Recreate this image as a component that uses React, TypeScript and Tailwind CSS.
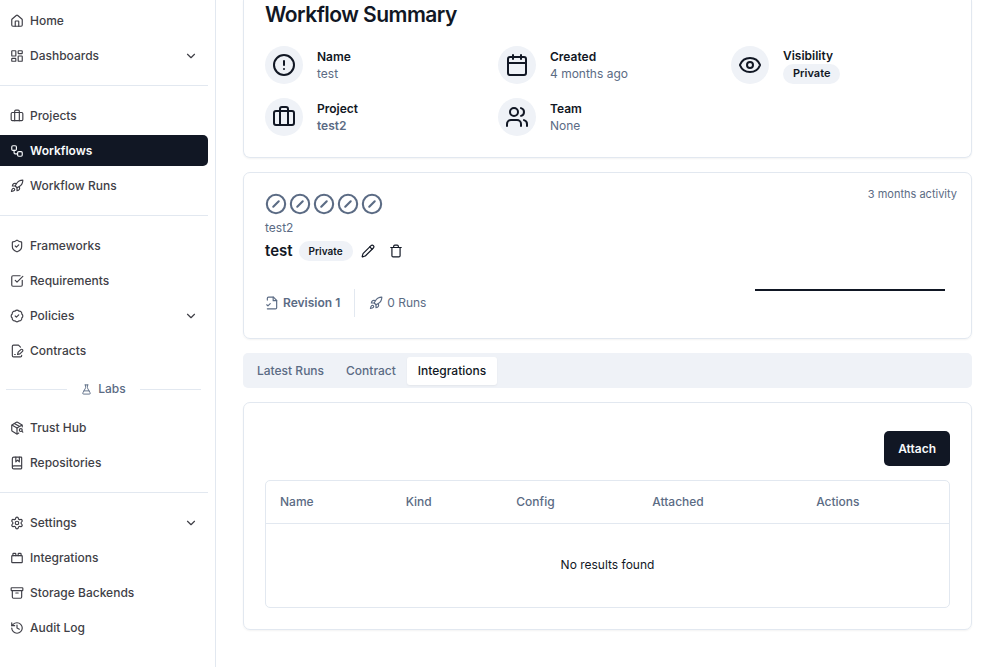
import React from 'react';
import {
  Archive,
  BadgeCheck,
  BookMarked,
  Briefcase,
  Calendar,
  ChevronDown,
  CircleAlert,
  CircleSlash,
  Eye,
  FlaskConical,
  History,
  House,
  LayoutDashboard,
  LucideIcon,
  PackageSearch,
  Pencil,
  Rocket,
  Settings,
  ShieldCheck,
  SquareCheckBig,
  ToyBrick,
  Trash,
  Users,
  Workflow,
} from 'lucide-react';

type IconType = LucideIcon | React.FC<{ className?: string; strokeWidth?: number }>;

const ContractIcon: IconType = ({ className, strokeWidth = 2 }: { className?: string; strokeWidth?: number }) => (
  <svg
    className={className}
    viewBox="0 0 24 24"
    fill="none"
    stroke="currentColor"
    strokeWidth={strokeWidth}
    strokeLinecap="round"
    strokeLinejoin="round"
  >
    <path d="M20 19.5v.5a2 2 0 0 1-2 2H6a2 2 0 0 1-2-2V4a2 2 0 0 1 2-2h8.5L18 5.5" />
    <path d="M8 18h1" />
    <path d="M18.42 9.61a2.1 2.1 0 1 1 2.97 2.97L16.95 17 13 18l.99-3.95 4.43-4.44Z" />
  </svg>
);

const RevisionIcon: IconType = ({ className, strokeWidth = 2 }: { className?: string; strokeWidth?: number }) => (
  <svg
    className={className}
    viewBox="0 0 24 24"
    fill="none"
    stroke="currentColor"
    strokeWidth={strokeWidth}
    strokeLinecap="round"
    strokeLinejoin="round"
  >
    <path d="M4 7V4a2 2 0 0 1 2-2h8.5L20 7.5V20a2 2 0 0 1-2 2H4" />
    <path d="M14 2v6h6" />
    <path d="m3 15 2 2 4-4" />
  </svg>
);

interface NavItemProps {
  icon: IconType;
  label: string;
  active?: boolean;
  expandable?: boolean;
}

const NavItem = ({ icon: Icon, label, active, expandable }: NavItemProps) => {
  const content = (
    <>
      <Icon className="size-[14px] shrink-0" strokeWidth={2} />
      <span>{label}</span>
      {expandable && <ChevronDown className="ml-auto size-[14px]" />}
    </>
  );
  const base = 'flex h-[31px] w-full items-center gap-[6px] rounded-r-[5px] pl-[10px] pr-[10px]';

  if (expandable) {
    return (
      <button type="button" className={`${base} cursor-pointer text-zinc-700`}>
        {content}
      </button>
    );
  }
  return (
    <a href="#" className={`${base} ${active ? 'bg-[#111724] font-semibold text-slate-50' : 'text-zinc-700'}`}>
      {content}
    </a>
  );
};

const Sidebar = () => (
  <aside className="w-[216px] shrink-0 border-r border-slate-200 pr-[7px] pt-[5px]">
    <nav className="text-[12px] font-medium leading-[18px]">
      <div className="flex flex-col gap-1">
        <NavItem icon={House} label="Home" />
        <NavItem icon={LayoutDashboard} label="Dashboards" expandable />
      </div>
      <hr className="my-[14px] border-slate-200" />
      <div className="flex flex-col gap-1">
        <NavItem icon={Briefcase} label="Projects" />
        <NavItem icon={Workflow} label="Workflows" active />
        <NavItem icon={Rocket} label="Workflow Runs" />
      </div>
      <hr className="my-[14px] border-slate-200" />
      <div className="flex flex-col gap-1">
        <NavItem icon={ShieldCheck} label="Frameworks" />
        <NavItem icon={SquareCheckBig} label="Requirements" />
        <NavItem icon={BadgeCheck} label="Policies" expandable />
        <NavItem icon={ContractIcon} label="Contracts" />
      </div>
      <div className="my-[14px] flex items-center gap-[14px] pl-[6px] pr-[7px] text-[#5b6b84]">
        <span className="h-px flex-1 bg-slate-200" />
        <span className="flex items-center gap-[6px]">
          <FlaskConical className="size-[11px]" />
          Labs
        </span>
        <span className="h-px flex-1 bg-slate-200" />
      </div>
      <div className="flex flex-col gap-1">
        <NavItem icon={PackageSearch} label="Trust Hub" />
        <NavItem icon={BookMarked} label="Repositories" />
      </div>
      <hr className="my-[14px] border-slate-200" />
      <div className="flex flex-col gap-1">
        <NavItem icon={Settings} label="Settings" expandable />
        <NavItem icon={ToyBrick} label="Integrations" />
        <NavItem icon={Archive} label="Storage Backends" />
        <NavItem icon={History} label="Audit Log" />
      </div>
    </nav>
  </aside>
);

const Badge = ({ children, compact }: { children: React.ReactNode; compact?: boolean }) => (
  <span
    className={`inline-flex h-5 items-center rounded-full bg-[#eff2f7] px-[10px] font-semibold ${
      compact ? 'text-[10px]' : 'text-[11px]'
    }`}
  >
    {children}
  </span>
);

const SummaryItem = ({ icon: Icon, label, children }: { icon: IconType; label: string; children: React.ReactNode }) => (
  <div className="flex items-center gap-[14px]">
    <div className="flex size-[38px] shrink-0 items-center justify-center rounded-full bg-[#eff2f7]">
      <Icon className="size-6" strokeWidth={2} />
    </div>
    <dl className="text-[12px] leading-[17px]">
      <dt className="font-semibold">{label}</dt>
      <dd className="text-[#5b6b84]">{children}</dd>
    </dl>
  </div>
);

const WorkflowSummary = () => (
  <section className="rounded-b-[7px] border border-t-0 border-slate-200 px-[21px] pb-[21px] shadow-xs">
    <h1 className="text-[21px] font-semibold leading-[30px] tracking-tight">Workflow Summary</h1>
    <div className="mt-4 grid grid-cols-3 gap-[14px]">
      <SummaryItem icon={CircleAlert} label="Name">test</SummaryItem>
      <SummaryItem icon={Calendar} label="Created">4 months ago</SummaryItem>
      <SummaryItem icon={Eye} label="Visibility">
        <span className="flex text-[#111724]"><Badge>Private</Badge></span>
      </SummaryItem>
      <SummaryItem icon={Briefcase} label="Project">
        <a href="#" className="font-semibold">test2</a>
      </SummaryItem>
      <SummaryItem icon={Users} label="Team">None</SummaryItem>
    </div>
  </section>
);

const WorkflowCard = () => (
  <section className="flex justify-between rounded-[7px] border border-slate-200 pb-[21px] pl-[21px] pr-[14px] pt-[14px] shadow-xs">
    <div className="pt-[6px] text-[12px] leading-[18px] text-[#5b6b84]">
      <div className="flex gap-[2px]">
        {[0, 1, 2, 3, 4].map((run) => (
          <CircleSlash key={run} className="size-[22px]" strokeWidth={2.25} />
        ))}
      </div>
      <p className="mt-1">test2</p>
      <div className="mt-1 flex h-5 items-center text-[#111724]">
        <h2 className="mr-[6px] text-[15px] font-semibold">test</h2>
        <Badge compact>Private</Badge>
        <button type="button" aria-label="Edit" className="ml-2 cursor-pointer">
          <Pencil className="size-[14px]" />
        </button>
        <button type="button" aria-label="Delete" className="ml-[14px] cursor-pointer">
          <Trash className="size-[14px]" />
        </button>
      </div>
      <div className="mt-7 flex h-7 items-center">
        <span className="flex items-center gap-1 font-semibold">
          <RevisionIcon className="size-[14px]" />
          Revision 1
        </span>
        <span className="mx-[14px] h-7 w-px bg-slate-200" />
        <span className="flex items-center gap-1">
          <Rocket className="size-[14px]" />
          0 Runs
        </span>
      </div>
    </div>
    <div className="flex flex-col items-end">
      <p className="text-[11px] leading-[14px] text-[#5b6b84]">3 months activity</p>
      <svg className="mr-3 mt-[88px] h-[2px] w-[190px]" viewBox="0 0 190 2" preserveAspectRatio="none">
        <path d="M0 1H190" stroke="#111724" strokeWidth="2" />
      </svg>
    </div>
  </section>
);

const tabs = ['Latest Runs', 'Contract', 'Integrations'];

const TabBar = () => (
  <div role="tablist" className="flex h-[35px] items-center rounded-[5px] bg-[#eff2f7] px-[3px] text-[12px] font-medium">
    {tabs.map((tab) => {
      const active = tab === 'Integrations';
      return (
        <button
          key={tab}
          type="button"
          role="tab"
          aria-selected={active}
          className={`h-7 cursor-pointer rounded-[3px] px-[11px] ${
            active ? 'bg-white text-[#111724] shadow-xs' : 'text-[#5b6b84]'
          }`}
        >
          {tab}
        </button>
      );
    })}
  </div>
);

const IntegrationsPanel = () => (
  <section className="rounded-[7px] border border-slate-200 px-[21px] pb-[21px] pt-7 text-[12px] shadow-xs">
    <div className="flex justify-end">
      <button
        type="button"
        className="h-[35px] cursor-pointer rounded-[5px] bg-[#111724] px-[14px] font-semibold text-slate-50"
      >
        Attach
      </button>
    </div>
    <div className="mt-[14px] rounded-[5px] border border-slate-200">
      <table className="w-full table-fixed">
        <thead>
          <tr className="h-[42px] border-b border-slate-200 text-left text-[#5b6b84]">
            <th className="w-[18.4%] px-[14px] font-medium">Name</th>
            <th className="w-[16.2%] px-[14px] font-medium">Kind</th>
            <th className="w-[19.9%] px-[14px] font-medium">Config</th>
            <th className="w-[24%] px-[14px] font-medium">Attached</th>
            <th className="px-[14px] font-medium">Actions</th>
          </tr>
        </thead>
        <tbody>
          <tr className="h-[84px]">
            <td colSpan={5} className="text-center">No results found</td>
          </tr>
        </tbody>
      </table>
    </div>
  </section>
);

export default function App() {
  return (
    <div className="flex min-h-screen bg-white font-['Inter',sans-serif] text-[#111724]">
      <Sidebar />
      <main className="flex min-w-0 flex-1 flex-col gap-[14px] pb-[37px] pl-[27px] pr-[14px]">
        <WorkflowSummary />
        <WorkflowCard />
        <TabBar />
        <IntegrationsPanel />
      </main>
    </div>
  );
}
